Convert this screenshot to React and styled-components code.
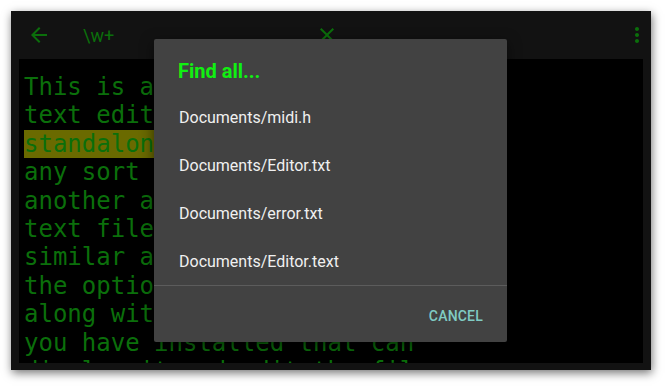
import React from "react";
import styled, { createGlobalStyle } from "styled-components";

const GlobalStyle = createGlobalStyle`
  html, body {
    margin: 0;
    padding: 0;
    background: #ffffff;
  }
  body {
    font-family: Roboto, "Liberation Sans", sans-serif;
  }
`;

const GREEN = "#0b6f0b";

const lines = [
  "This is a simple generic",
  "text editor for use as a",
  ["standalone", " app or for editing"],
  "any sort of text file from",
  "another app. It will open",
  "text files from a file manager",
  "similar app, and will offer",
  "the option of using Editor",
  "along with any other app",
  "you have installed that can",
  "display it and edit the files.",
];

const results = [
  "Documents/midi.h",
  "Documents/Editor.txt",
  "Documents/error.txt",
  "Documents/Editor.text",
];

const BackIcon = () => (
  <svg width="24" height="24" viewBox="0 0 24 24" fill={GREEN}>
    <path d="M20 11H7.83l5.59-5.59L12 4l-8 8 8 8 1.41-1.41L7.83 13H20v-2z" />
  </svg>
);

const CloseIcon = () => (
  <svg width="24" height="24" viewBox="0 0 24 24" fill={GREEN}>
    <path d="M19 6.41L17.59 5 12 10.59 6.41 5 5 6.41 10.59 12 5 17.59 6.41 19 12 13.41 17.59 19 19 17.59 13.41 12z" />
  </svg>
);

const MoreIcon = () => (
  <svg width="24" height="24" viewBox="0 0 24 24" fill={GREEN}>
    <path d="M12 8c1.1 0 2-.9 2-2s-.9-2-2-2-2 .9-2 2 .9 2 2 2zm0 2c-1.1 0-2 .9-2 2s.9 2 2 2 2-.9 2-2-.9-2-2-2zm0 6c-1.1 0-2 .9-2 2s.9 2 2 2 2-.9 2-2-.9-2-2-2z" />
  </svg>
);

const App = () => {
  return (
    <>
      <GlobalStyle />
      <Page>
        <Screen>
          <Toolbar>
            <IconButton>
              <BackIcon />
            </IconButton>
            <Query>\w+</Query>
            <IconButton>
              <CloseIcon />
            </IconButton>
            <Spacer />
            <IconButton>
              <MoreIcon />
            </IconButton>
          </Toolbar>
          <Editor>
            {lines.map((line, i) =>
              Array.isArray(line) ? (
                <Line key={i}>
                  <Match>{line[0]}</Match>
                  {line[1]}
                </Line>
              ) : (
                <Line key={i}>{line}</Line>
              )
            )}
          </Editor>
          <Dialog>
            <DialogTitle>Find all...</DialogTitle>
            <ResultList>
              {results.map((r) => (
                <ResultItem key={r}>{r}</ResultItem>
              ))}
            </ResultList>
            <DialogFooter>
              <TextButton>CANCEL</TextButton>
            </DialogFooter>
          </Dialog>
        </Screen>
      </Page>
    </>
  );
};

export default App;

const Page = styled.div`
  width: 670px;
  height: 390px;
  padding: 11px;
  box-sizing: border-box;
  overflow: hidden;
`;

const Screen = styled.div`
  position: relative;
  width: 640px;
  height: 359px;
  background: #121212;
  display: flex;
  flex-direction: column;
  padding: 0 8px 7px;
  box-sizing: border-box;
  box-shadow: 1px 3px 9px rgba(0, 0, 0, 0.55);
`;

const Toolbar = styled.div`
  height: 48px;
  flex: 0 0 48px;
  display: flex;
  align-items: center;
  margin: 0 -8px;
  padding: 0 2px 0 16px;
`;

const IconButton = styled.div`
  width: 24px;
  height: 24px;
  flex: 0 0 24px;
  display: flex;
  align-items: center;
  justify-content: center;
`;

const Query = styled.div`
  flex: 0 0 264px;
  box-sizing: border-box;
  padding-left: 32px;
  color: ${GREEN};
  font-family: Roboto, "Liberation Sans", sans-serif;
  font-size: 18px;
`;

const Spacer = styled.div`
  flex: 1;
`;

const Editor = styled.div`
  flex: 1;
  background: #000000;
  padding: 14px 0 0 5px;
  overflow: hidden;
  font-family: "DejaVu Sans Mono", "Liberation Mono", monospace;
  font-size: 24px;
  line-height: 28.4px;
  color: ${GREEN};
`;

const Line = styled.div`
  white-space: pre;
`;

const Match = styled.span`
  background: #6a6a00;
`;

const Dialog = styled.div`
  position: absolute;
  left: 143px;
  top: 28px;
  width: 353px;
  height: 303px;
  background: #424242;
  border-radius: 2px;
  box-shadow: 0 4px 14px rgba(0, 0, 0, 0.55);
  display: flex;
  flex-direction: column;
  font-family: Roboto, "Liberation Sans", sans-serif;
`;

const DialogTitle = styled.div`
  padding: 20px 24px 10px;
  font-size: 20px;
  line-height: 24px;
  font-weight: 700;
  color: #11f011;
`;

const ResultList = styled.div`
  display: flex;
  flex-direction: column;
  border-bottom: 1px solid #5c5c5c;
`;

const ResultItem = styled.div`
  height: 48px;
  display: flex;
  align-items: center;
  padding: 0 25px;
  font-size: 16px;
  color: #f0f0f0;
`;

const DialogFooter = styled.div`
  flex: 1;
  display: flex;
  align-items: center;
  justify-content: flex-end;
  padding: 4px 24px 0;
`;

const TextButton = styled.div`
  font-size: 14px;
  font-weight: 500;
  color: #80cbc4;
  letter-spacing: 0.2px;
`;
